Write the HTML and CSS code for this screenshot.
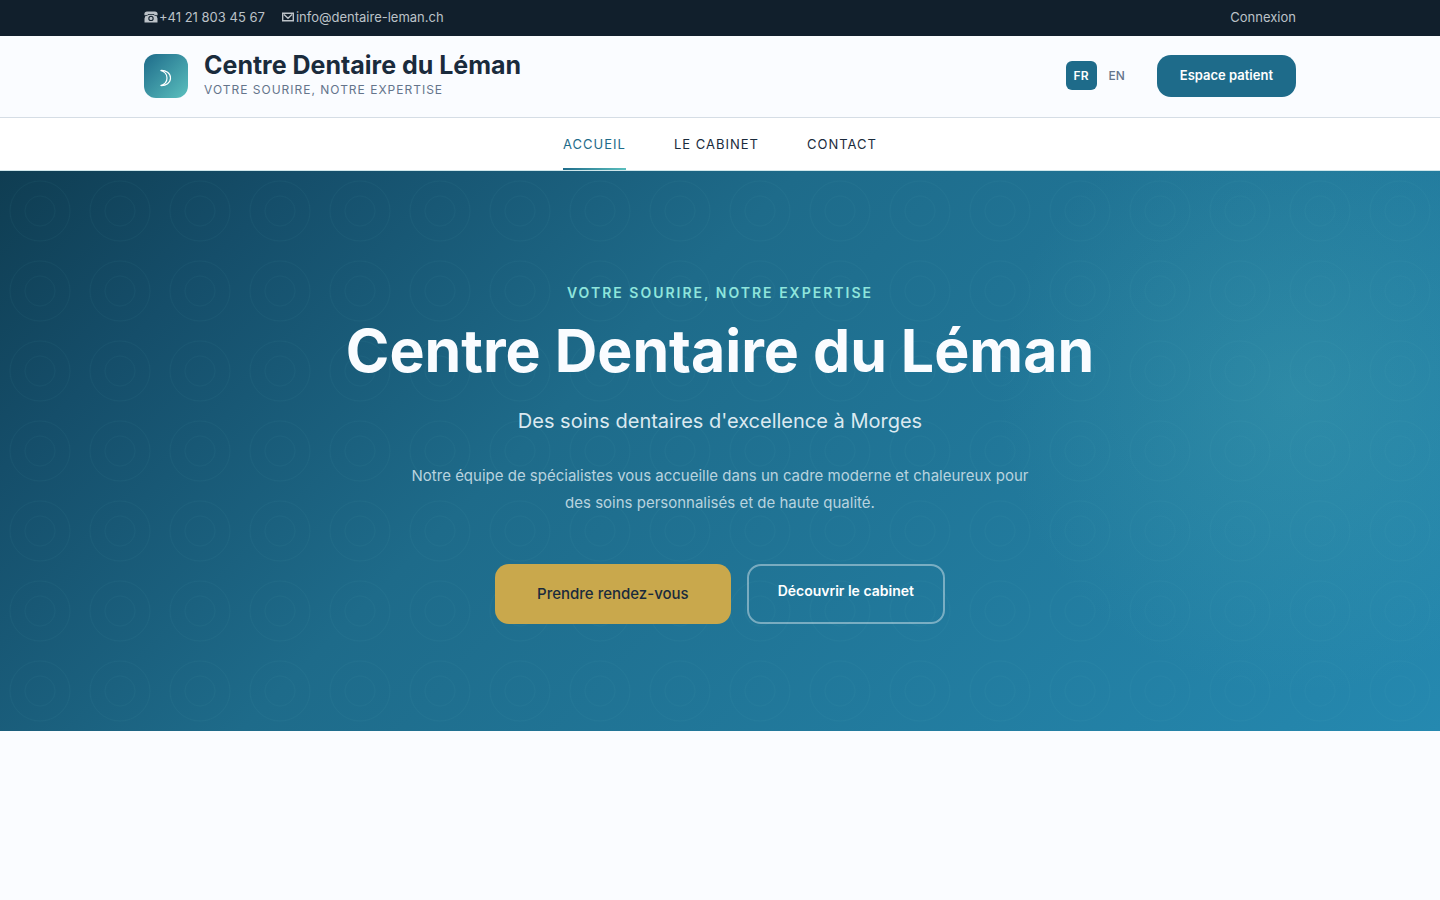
FILE: index.html
```html
<!DOCTYPE html>
<html lang="fr">

<head>
    <meta charset="utf-8">
    <meta name="viewport" content="width=device-width, initial-scale=1">
    <title>Centre Dentaire du Léman</title>
    <link rel="stylesheet" href="styles.css">
</head>

<body>
    <div class="topbar">
        <div class="container topbar-inner">
            <div class="topbar-contact">
                <a href="tel:+41218034567">
                    <svg class="topbar-icon" viewBox="0 0 14 14" aria-hidden="true">
                        <path fill="currentColor" fill-rule="evenodd" d="M3 1.500h8c1.600 0 2.600 1 2.600 2.300v1.400h-3.400V4H3.800v1.200H.4V3.800C.4 2.500 1.400 1.500 3 1.500zM4.600 4.700h4.800l1.600 1.300h1.600l.9 2.500v4H.5v-4L1.400 6H3zM7 5.700a2.700 2.700 0 1 0 0 5.400 2.700 2.700 0 0 0 0-5.400zm0 1.100a1.600 1.600 0 1 1 0 3.200 1.600 1.600 0 0 1 0-3.200z"/>
                    </svg>
                    <span>+41 21 803 45 67</span>
                </a>
                <a href="mailto:info@dentaire-leman.ch">
                    <svg class="topbar-icon" viewBox="0 0 14 14" aria-hidden="true">
                        <path fill="none" stroke="currentColor" stroke-width="1.400" d="M1.700 3.200h10.600v7.600H1.700zM3 4.500l4 3.700 4-3.700"/>
                    </svg>
                    <span>info@dentaire-leman.ch</span>
                </a>
            </div>
            <a href="#connexion">Connexion</a>
        </div>
    </div>

    <header class="header">
        <div class="container header-inner">
            <a class="logo" href="#accueil">
                <span class="logo-mark">
                    <svg viewBox="0 0 14 18" aria-hidden="true">
                        <path fill="none" stroke="currentColor" stroke-width="1.200" d="M1.500 1.500C7 1 11.500 4.400 11.500 9S7 17 1.500 16.500C5.500 15.500 8 12.700 8 9S5.500 2.500 1.500 1.500z"/>
                    </svg>
                </span>
                <span class="logo-text">
                    <span class="logo-name">Centre Dentaire du Léman</span>
                    <span class="logo-tagline">Votre sourire, notre expertise</span>
                </span>
            </a>
            <div class="header-actions">
                <div class="lang">
                    <a class="active" href="#fr">FR</a>
                    <a href="#en">EN</a>
                </div>
                <a class="btn btn-primary" href="#patient">Espace patient</a>
            </div>
        </div>
    </header>

    <nav class="nav">
        <a class="active" href="#accueil">Accueil</a>
        <a href="#cabinet">Le cabinet</a>
        <a href="#contact">Contact</a>
    </nav>

    <main>
        <section class="hero">
            <div class="hero-content">
                <p class="hero-eyebrow">Votre sourire, notre expertise</p>
                <h1>Centre Dentaire du Léman</h1>
                <p class="hero-subtitle">Des soins dentaires d'excellence à Morges</p>
                <p class="hero-text">Notre équipe de spécialistes vous accueille dans un cadre moderne et chaleureux pour des soins personnalisés et de haute qualité.</p>
                <div class="hero-actions">
                    <a class="btn btn-gold" href="#rendez-vous">Prendre rendez-vous</a>
                    <a class="btn btn-outline" href="#cabinet">Découvrir le cabinet</a>
                </div>
            </div>
        </section>
    </main>
</body>

</html>
```

FILE: styles.css
```css
:root {
    --primary: #1e6b8a;
    --teal: #5bc0be;
    --ink: #1a2b3c;
    --muted: #64748b;
    --gold: #c9a84c;
    --page: #fafcff;
}

* {
    box-sizing: border-box;
    margin: 0;
    padding: 0;
}

body {
    background: var(--page);
    color: var(--ink);
    font-family: Inter, "Liberation Sans", sans-serif;
    font-size: 16px;
}

a {
    color: inherit;
    text-decoration: none;
}

.container {
    max-width: 1200px;
    margin: 0 auto;
    padding: 0 24px;
}

/* top bar */
.topbar {
    background: #111f2c;
    color: #bcc2c8;
    font-size: 13px;
    line-height: 20px;
    padding: 7px 0 9px;
}

.topbar-inner,
.topbar-contact,
.topbar-contact a {
    display: flex;
    align-items: center;
}

.topbar-inner {
    justify-content: space-between;
}

.topbar-contact {
    gap: 16px;
}

.topbar-contact a {
    gap: 1px;
}

.topbar-icon {
    width: 14px;
    height: 14px;
}

/* header */
.header {
    border-bottom: 1px solid #d5dde5;
    padding: 15px 0 17px;
}

.header-inner,
.header-actions,
.lang,
.logo {
    display: flex;
    align-items: center;
}

.header-inner {
    justify-content: space-between;
}

.logo {
    gap: 16px;
}

.logo-mark {
    display: flex;
    align-items: center;
    justify-content: center;
    width: 44px;
    height: 44px;
    padding-top: 4px;
    border-radius: 12px;
    background: linear-gradient(135deg, var(--primary), var(--teal));
    color: #fff;
}

.logo-mark svg {
    width: 14px;
    height: 18px;
}

.logo-text {
    display: flex;
    flex-direction: column;
}

.logo-name {
    font-size: 25px;
    font-weight: 700;
    line-height: 29px;
}

.logo-tagline {
    color: var(--muted);
    font-size: 12px;
    letter-spacing: 1px;
    line-height: 20px;
    text-transform: uppercase;
}

.header-actions {
    gap: 24px;
}

.lang {
    gap: 4px;
    color: var(--muted);
    font-size: 12px;
    font-weight: 500;
    line-height: 21px;
}

.lang a {
    border-radius: 6px;
    padding: 4px 8px;
}

.lang .active {
    background: var(--primary);
    color: #fff;
    font-weight: 600;
}

.btn {
    border-radius: 14px;
    font-weight: 600;
}

.btn-primary {
    background: var(--primary);
    color: #fff;
    font-size: 13px;
    line-height: 20px;
    padding: 10px 23px 12px;
}

/* navigation */
.nav {
    display: flex;
    justify-content: center;
    gap: 48px;
    background: #fff;
    border-bottom: 1px solid #cfe6ea;
    font-size: 13px;
    letter-spacing: 1px;
    line-height: 20px;
    text-transform: uppercase;
}

.nav a {
    border-bottom: 2px solid transparent;
    padding: 16px 0 14px;
}

.nav .active {
    border-image: linear-gradient(90deg, var(--primary), var(--teal)) 1;
    color: var(--primary);
}

/* hero */
.hero {
    background:
        url("data:image/svg+xml,%3Csvg xmlns='http://www.w3.org/2000/svg' width='80' height='80'%3E%3Cg fill='none' stroke='%235bc0be' stroke-opacity='.05'%3E%3Ccircle cx='40' cy='40' r='30'/%3E%3Ccircle cx='40' cy='40' r='15'/%3E%3C/g%3E%3C/svg%3E"),
        radial-gradient(circle at 90% 40%, rgba(91, 192, 190, .2), transparent 300px),
        linear-gradient(135deg, #0f3d52 0%, #154e6a 15%, #1e6b8a 40%, #2589b0 100%);
    color: #fff;
    padding: 112px 24px 107px;
    text-align: center;
}

.hero-content {
    max-width: 800px;
    margin: 0 auto;
}

.hero-eyebrow {
    color: #8fe5dc;
    font-size: 14px;
    font-weight: 600;
    letter-spacing: 2px;
    line-height: 20px;
    text-transform: uppercase;
}

.hero h1 {
    color: var(--page);
    font-size: 59px;
    font-weight: 700;
    line-height: 64px;
    margin: 16px 0 24px;
}

.hero-subtitle {
    color: #dbe9f0;
    font-size: 20px;
    line-height: 28px;
}

.hero-text {
    max-width: 640px;
    margin: 27px auto 48px;
    color: #b8d3df;
    font-size: 15px;
    line-height: 27px;
}

.hero-actions {
    display: flex;
    flex-wrap: wrap;
    justify-content: center;
    gap: 16px;
}

.btn-gold {
    background: var(--gold);
    color: var(--ink);
    font-size: 15px;
    font-weight: 500;
    line-height: 24px;
    padding: 18px 42px;
}

.btn-outline {
    border: 2px solid rgba(255, 255, 255, .4);
    font-size: 14px;
    line-height: 22px;
    padding: 14px 29px;
}
```
